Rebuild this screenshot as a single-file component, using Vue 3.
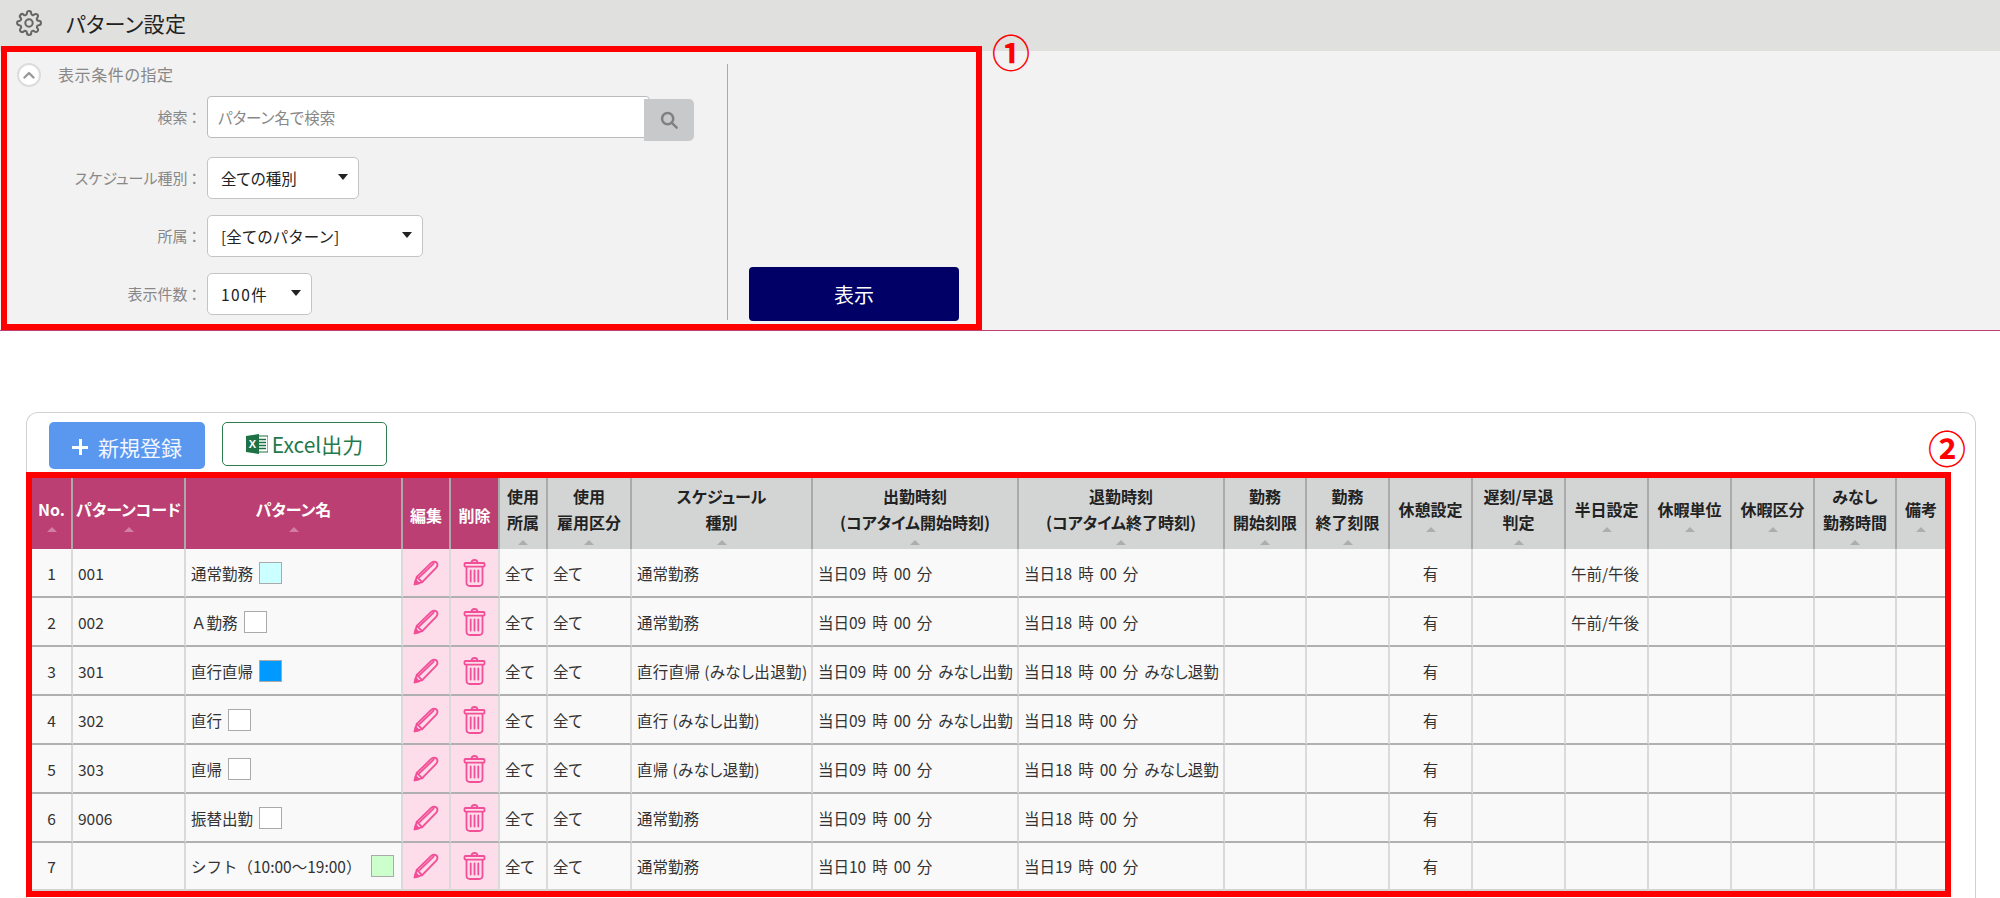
<template>
  <div class="page">
    <!-- Title bar -->
    <header class="title-bar">
      <svg class="gear" viewBox="0 0 24 24" fill="none" stroke="#666" stroke-width="1.900" stroke-linecap="round" stroke-linejoin="round">
        <circle cx="12" cy="12" r="3.400" />
        <path d="M19.400 15a1.650 1.650 0 0 0 .33 1.820l.06.06a2 2 0 1 1-2.830 2.830l-.06-.06a1.650 1.650 0 0 0-1.820-.33 1.650 1.650 0 0 0-1 1.510V21a2 2 0 1 1-4 0v-.09A1.650 1.650 0 0 0 9 19.400a1.650 1.650 0 0 0-1.820.33l-.06.06a2 2 0 1 1-2.830-2.830l.06-.06a1.650 1.650 0 0 0 .33-1.820 1.650 1.650 0 0 0-1.510-1H3a2 2 0 1 1 0-4h.09A1.650 1.650 0 0 0 4.600 9a1.650 1.650 0 0 0-.33-1.820l-.06-.06a2 2 0 1 1 2.830-2.830l.06.06a1.650 1.650 0 0 0 1.820.33H9a1.650 1.650 0 0 0 1-1.510V3a2 2 0 1 1 4 0v.09a1.650 1.650 0 0 0 1 1.510 1.650 1.650 0 0 0 1.820-.33l.06-.06a2 2 0 1 1 2.830 2.830l-.06.06a1.650 1.650 0 0 0-.33 1.820V9a1.650 1.650 0 0 0 1.510 1H21a2 2 0 1 1 0 4h-.09a1.650 1.650 0 0 0-1.510 1z" />
      </svg>
      <h1 class="page-title">パターン設定</h1>
    </header>

    <!-- Filter panel -->
    <section class="filter">
      <div class="filter-main">
        <div class="filter-head">
          <span class="toggle">
            <svg viewBox="0 0 12 8" fill="none" stroke="#999" stroke-width="2.400" stroke-linecap="round" stroke-linejoin="round">
              <path d="M1.500 6.500 6 2l4.500 4.500" />
            </svg>
          </span>
          <span class="filter-title">表示条件の指定</span>
        </div>
        <div class="filter-rows">
          <div class="filter-row">
            <label class="filter-label">検索<span class="colon">：</span></label>
            <input class="search-input" type="text" placeholder="パターン名で検索" />
            <button class="search-btn">
              <svg viewBox="0 0 20 20" fill="none" stroke="#808080" stroke-width="2.800" stroke-linecap="round">
                <circle cx="8.500" cy="8.500" r="6.200" />
                <path d="M13.200 13.200 18.500 18.500" />
              </svg>
            </button>
          </div>
          <div v-for="f in selects" :key="f.label" class="filter-row">
            <label class="filter-label">{{ f.label }}<span class="colon">：</span></label>
            <div class="select-wrap" :class="f.cls">
              <select class="select">
                <option>{{ f.value }}</option>
              </select>
            </div>
          </div>
        </div>
      </div>
      <div class="filter-side">
        <button class="show-btn">表示</button>
      </div>
    </section>

    <!-- List -->
    <section class="card">
      <div class="toolbar">
        <button class="new-btn"><span class="plus"></span>新規登録</button>
        <button class="excel-btn">
          <svg class="excel-icon" viewBox="0 0 22 20">
            <rect x="9" y="2" width="13" height="16" fill="#fff" stroke="#1e7145" stroke-width="1" />
            <path d="M13 5.500h7M13 8.500h7M13 11.500h7M13 14.500h7" stroke="#1e7145" stroke-width="1.600" />
            <path d="M0 2 13 0v20L0 18z" fill="#1e7145" />
            <text x="6.500" y="14" text-anchor="middle" class="excel-x">X</text>
          </svg>
          Excel出力
        </button>
      </div>

      <div class="table-wrap">
        <table class="pattern-table">
          <colgroup>
            <col v-for="(c, i) in columns" :key="i" :class="'w' + c.w" />
          </colgroup>
          <thead>
            <tr>
              <th v-for="(c, i) in columns" :key="i" :class="{ pink: i < 5 }">
                <template v-for="(line, j) in c.title" :key="j">
                  {{ line }}<br v-if="j < c.title.length - 1" />
                </template>
                <span v-if="c.sort" class="caret"></span>
              </th>
            </tr>
          </thead>
          <tbody>
            <tr v-for="r in rows" :key="r.no">
              <td class="center">{{ r.no }}</td>
              <td>{{ r.code }}</td>
              <td>
                <div class="name-cell" :class="{ wide: r.wide }">
                  <span>{{ r.name }}</span>
                  <span class="swatch" :class="r.color"></span>
                </div>
              </td>
              <td class="action">
                <svg class="pencil" viewBox="0 0 24 24" fill="none" stroke="#f24f98" stroke-width="1.700" stroke-linejoin="round" stroke-linecap="round">
                  <path d="M1.500 22.500 3.500 15.500 17 2.500Q19.500.8 21.800 2.400 23.500 4.500 21.500 7L8.500 20.500Z" />
                  <path d="M3.500 15.500 8.500 20.500M6 15.800 19 3.400" />
                  <path d="M1.500 22.500 2.500 18.500 5.500 21.500Z" fill="#f24f98" />
                </svg>
              </td>
              <td class="action">
                <svg class="trash" viewBox="0 0 22 28" fill="none" stroke="#f24f98" stroke-width="1.800" stroke-linejoin="round" stroke-linecap="round">
                  <path d="M8 4Q8 1 11 1T14 4" />
                  <rect x="1" y="4" width="20" height="3.600" rx="1" />
                  <path d="M3 8v15.500Q3 27 6.500 27h9q3.500 0 3.500-3.500V8" />
                  <path d="M7.200 11.500v11M11 11.500v11M14.800 11.500v11" />
                </svg>
              </td>
              <td>全て</td>
              <td>全て</td>
              <td :class="{ long: r.type.includes('(') }">{{ r.type }}</td>
              <td class="time">{{ r.start }}</td>
              <td class="time">{{ r.end }}</td>
              <td></td>
              <td></td>
              <td class="center">有</td>
              <td></td>
              <td>{{ r.half }}</td>
              <td></td>
              <td></td>
              <td></td>
              <td></td>
            </tr>
          </tbody>
        </table>
      </div>
    </section>

    <!-- Annotations over the screenshot -->
    <div class="mark-box"></div>
    <span class="mark-num num-one">①</span>
    <span class="mark-num num-two">②</span>
  </div>
</template>

<script setup>
const selects = [
  { label: 'スケジュール種別', value: '全ての種別', cls: 'sel-type' },
  { label: '所属', value: '[全てのパターン]', cls: 'sel-dept' },
  { label: '表示件数', value: '100件', cls: 'sel-count' }
]

const columns = [
  { title: ['No.'], w: 41, sort: true },
  { title: ['パターンコード'], w: 113, sort: true },
  { title: ['パターン名'], w: 217, sort: true },
  { title: ['編集'], w: 48 },
  { title: ['削除'], w: 49 },
  { title: ['使用', '所属'], w: 48, sort: true },
  { title: ['使用', '雇用区分'], w: 84, sort: true },
  { title: ['スケジュール', '種別'], w: 181, sort: true },
  { title: ['出勤時刻', '(コアタイム開始時刻)'], w: 206, sort: true },
  { title: ['退勤時刻', '(コアタイム終了時刻)'], w: 206, sort: true },
  { title: ['勤務', '開始刻限'], w: 82, sort: true },
  { title: ['勤務', '終了刻限'], w: 83, sort: true },
  { title: ['休憩設定'], w: 83, sort: true },
  { title: ['遅刻/早退', '判定'], w: 93, sort: true },
  { title: ['半日設定'], w: 83, sort: true },
  { title: ['休暇単位'], w: 83, sort: true },
  { title: ['休暇区分'], w: 83, sort: true },
  { title: ['みなし', '勤務時間'], w: 82, sort: true },
  { title: ['備考'], w: 48, sort: true }
]

const rows = [
  { no: 1, code: '001', name: '通常勤務', color: 'cyan', type: '通常勤務', start: '当日09 時 00 分', end: '当日18 時 00 分', half: '午前/午後' },
  { no: 2, code: '002', name: 'Ａ勤務', color: 'white', type: '通常勤務', start: '当日09 時 00 分', end: '当日18 時 00 分', half: '午前/午後' },
  { no: 3, code: '301', name: '直行直帰', color: 'blue', type: '直行直帰 (みなし出退勤)', start: '当日09 時 00 分 みなし出勤', end: '当日18 時 00 分 みなし退勤', half: '' },
  { no: 4, code: '302', name: '直行', color: 'white', type: '直行 (みなし出勤)', start: '当日09 時 00 分 みなし出勤', end: '当日18 時 00 分', half: '' },
  { no: 5, code: '303', name: '直帰', color: 'white', type: '直帰 (みなし退勤)', start: '当日09 時 00 分', end: '当日18 時 00 分 みなし退勤', half: '' },
  { no: 6, code: '9006', name: '振替出勤', color: 'white', type: '通常勤務', start: '当日09 時 00 分', end: '当日18 時 00 分', half: '' },
  { no: 7, code: '', name: 'シフト（10:00～19:00）', color: 'green', type: '通常勤務', start: '当日10 時 00 分', end: '当日19 時 00 分', half: '', wide: true }
]
</script>

<style>
html,
body {
  margin: 0;
  overflow: hidden;
  background: #fff;
}
</style>

<style scoped>
.page {
  position: relative;
  width: 2000px;
  height: 898px;
  overflow: hidden;
  font-family: "Noto Sans CJK JP", "Noto Sans", sans-serif;
  font-size: 16px;
  color: #333;
  font-feature-settings: "palt";
}

.title-bar {
  display: flex;
  align-items: center;
  height: 51px;
  padding: 0 0 5px 16px;
  box-sizing: border-box;
  background: #e0e0de;
}

.gear {
  width: 26px;
  height: 26px;
}

.page-title {
  margin: 0 0 0 24px;
  font-size: 21px;
  font-weight: 400;
  letter-spacing: .3px;
  color: #222;
}

/* Filter panel */
.filter {
  display: flex;
  height: 280px;
  box-sizing: border-box;
  background: #f2f2f2;
  border-bottom: 1px solid #c04072;
}

.filter-main {
  width: 728px;
  height: 256px;
  margin-top: 13px;
  padding-left: 17px;
  box-sizing: border-box;
  border-right: 1px solid #aaa;
}

.filter-head {
  display: flex;
  align-items: center;
  gap: 17px;
  height: 22px;
  margin-bottom: 10px;
}

.toggle {
  display: flex;
  align-items: center;
  justify-content: center;
  width: 24px;
  height: 24px;
  box-sizing: border-box;
  border: 2px solid #dcdcdc;
  border-radius: 50%;
  background: #fff;
}

.toggle svg {
  width: 12px;
  height: 8px;
}

.filter-title {
  padding-bottom: 2px;
  font-size: 16px;
  letter-spacing: .6px;
  color: #888;
}

.filter-rows {
  display: flex;
  flex-direction: column;
  gap: 16px;
}

.filter-row {
  display: flex;
  align-items: flex-start;
}

.filter-label {
  width: 181px;
  margin-right: 9px;
  line-height: 42px;
  text-align: right;
  font-size: 15px;
  color: #888;
}

.colon {
  margin-left: 3px;
}

.search-input {
  width: 443px;
  height: 42px;
  padding: 0 10px;
  box-sizing: border-box;
  border: 1px solid #bbb;
  border-radius: 4px;
  background: #fff;
  font: inherit;
  font-size: 15.500px;
  font-feature-settings: "palt";
}

.search-input::placeholder {
  color: #888;
  opacity: 1;
}

.search-btn {
  display: flex;
  align-items: center;
  justify-content: center;
  width: 50px;
  height: 42px;
  margin: 3px 0 0 -6px;
  padding: 0;
  border: 0;
  border-radius: 0 5px 5px 0;
  background: #c8c9ca;
}

.search-btn svg {
  width: 18px;
  height: 18px;
}

.select-wrap {
  position: relative;
  height: 42px;
}

.select-wrap::after {
  content: "";
  position: absolute;
  top: 17px;
  right: 11px;
  border-left: 5px solid transparent;
  border-right: 5px solid transparent;
  border-top: 6px solid #222;
}

.sel-type {
  width: 152px;
}

.sel-dept {
  width: 216px;
}

.sel-count {
  width: 105px;
}

.select {
  width: 100%;
  height: 100%;
  padding: 0 0 0 13px;
  box-sizing: border-box;
  appearance: none;
  border: 1px solid #c4c4c4;
  border-radius: 5px;
  background: #fff;
  color: #222;
  font: inherit;
  font-size: 15.500px;
  font-feature-settings: "palt";
}

.sel-dept .select {
  font-feature-settings: normal;
}

.sel-count .select {
  letter-spacing: 1.500px;
}

.filter-side {
  display: flex;
  flex-direction: column;
  justify-content: flex-end;
  height: 257px;
  margin: 13px 0 0 21px;
}

.show-btn {
  width: 210px;
  height: 54px;
  border: 0;
  border-radius: 4px;
  background: #000066;
  color: #fff;
  font: inherit;
  font-size: 20px;
}

/* List card */
.card {
  width: 1950px;
  height: 487px;
  margin: 81px 0 0 26px;
  padding: 9px 0 0;
  box-sizing: border-box;
  border: 1px solid #d2d2d2;
  border-bottom: 0;
  border-radius: 12px 12px 0 0;
}

.toolbar {
  display: flex;
  align-items: flex-start;
  gap: 17px;
  height: 50px;
  padding-left: 22px;
}

.new-btn {
  display: flex;
  align-items: center;
  justify-content: center;
  width: 156px;
  height: 47px;
  padding: 3px 0 0;
  border: 0;
  border-radius: 5px;
  background: #5a98f0;
  color: #f2f6ff;
  font: inherit;
  font-size: 21px;
}

.plus {
  position: relative;
  width: 16px;
  height: 16px;
  margin-right: 10px;
  background:
    linear-gradient(#fff, #fff) center / 100% 3px no-repeat,
    linear-gradient(#fff, #fff) center / 3px 100% no-repeat;
}

.excel-btn {
  display: flex;
  align-items: center;
  justify-content: center;
  gap: 4px;
  width: 165px;
  height: 44px;
  padding: 0;
  box-sizing: border-box;
  border: 1px solid #2e7d4f;
  border-radius: 5px;
  background: #fff;
  color: #1f7a4d;
  font: inherit;
  font-size: 21px;
}

.excel-icon {
  width: 22px;
  height: 20px;
}

.excel-x {
  font-family: "Liberation Sans", sans-serif;
  font-size: 11px;
  font-weight: 700;
  fill: #fff;
}

.table-wrap {
  width: 1925px;
  margin-left: -1px;
  border: 6px solid #f00;
  box-sizing: border-box;
}

.pattern-table {
  width: 1913px;
  table-layout: fixed;
  border-collapse: separate;
  border-spacing: 0;
  background: #f9f9f9;
}

.w41 { width: 41px; }
.w48 { width: 48px; }
.w49 { width: 49px; }
.w82 { width: 82px; }
.w83 { width: 83px; }
.w84 { width: 84px; }
.w93 { width: 93px; }
.w113 { width: 113px; }
.w181 { width: 181px; }
.w206 { width: 206px; }
.w217 { width: 217px; }

th {
  height: 71px;
  padding: 2px 0 0;
  box-sizing: border-box;
  background: #d3d5d5;
  border-right: 2px solid #aaa;
  font-size: 16px;
  font-weight: 700;
  line-height: 26px;
  color: #222;
  white-space: nowrap;
}

th:last-child,
td:last-child {
  border-right: 0;
}

th.pink {
  background: #bb3f72;
  color: #fff;
}

.caret {
  display: block;
  width: 0;
  height: 0;
  margin: 5px auto 1px;
  border-left: 5px solid transparent;
  border-right: 5px solid transparent;
  border-bottom: 5px solid #adadad;
}

th.pink .caret {
  border-bottom-color: #d27fa3;
}

td {
  height: 49px;
  padding: 0 4px 0 5px;
  box-sizing: border-box;
  border-right: 2px solid #dadada;
  border-bottom: 2px solid #b0b0b0;
  font-size: 15.500px;
  white-space: nowrap;
}

tr:last-child td {
  height: 48px;
  border-bottom-color: #d2d2d2;
}

td.center {
  padding: 0;
  text-align: center;
}

td.action {
  padding: 0;
  background: #fcdde9;
  text-align: center;
}

td.long {
  letter-spacing: .35px;
}

td.time {
  word-spacing: 2.500px;
}

.name-cell {
  display: flex;
  align-items: center;
  gap: 6px;
  font-feature-settings: normal;
}

.name-cell.wide {
  justify-content: space-between;
  padding-right: 3px;
}

.swatch {
  width: 23px;
  height: 22px;
  box-sizing: border-box;
  border: 1px solid #aaa;
}

.cyan { background: #ccffff; }
.white { background: #fff; }
.blue { background: #0099ff; }
.green { background: #ccffcc; }

.pencil {
  display: block;
  width: 26px;
  height: 26px;
  margin: 0 auto;
}

.trash {
  display: block;
  width: 23px;
  height: 28px;
  margin: 0 auto;
}

/* Red annotations */
.mark-box {
  position: absolute;
  top: 46px;
  left: 1px;
  width: 981px;
  height: 284px;
  box-sizing: border-box;
  border: 6px solid #f00;
}

.mark-num {
  position: absolute;
  font-size: 38px;
  font-weight: 700;
  line-height: 38px;
  color: #f00;
  font-feature-settings: normal;
}

.num-one {
  top: 32px;
  left: 992px;
}

.num-two {
  top: 428px;
  left: 1928px;
}
</style>
